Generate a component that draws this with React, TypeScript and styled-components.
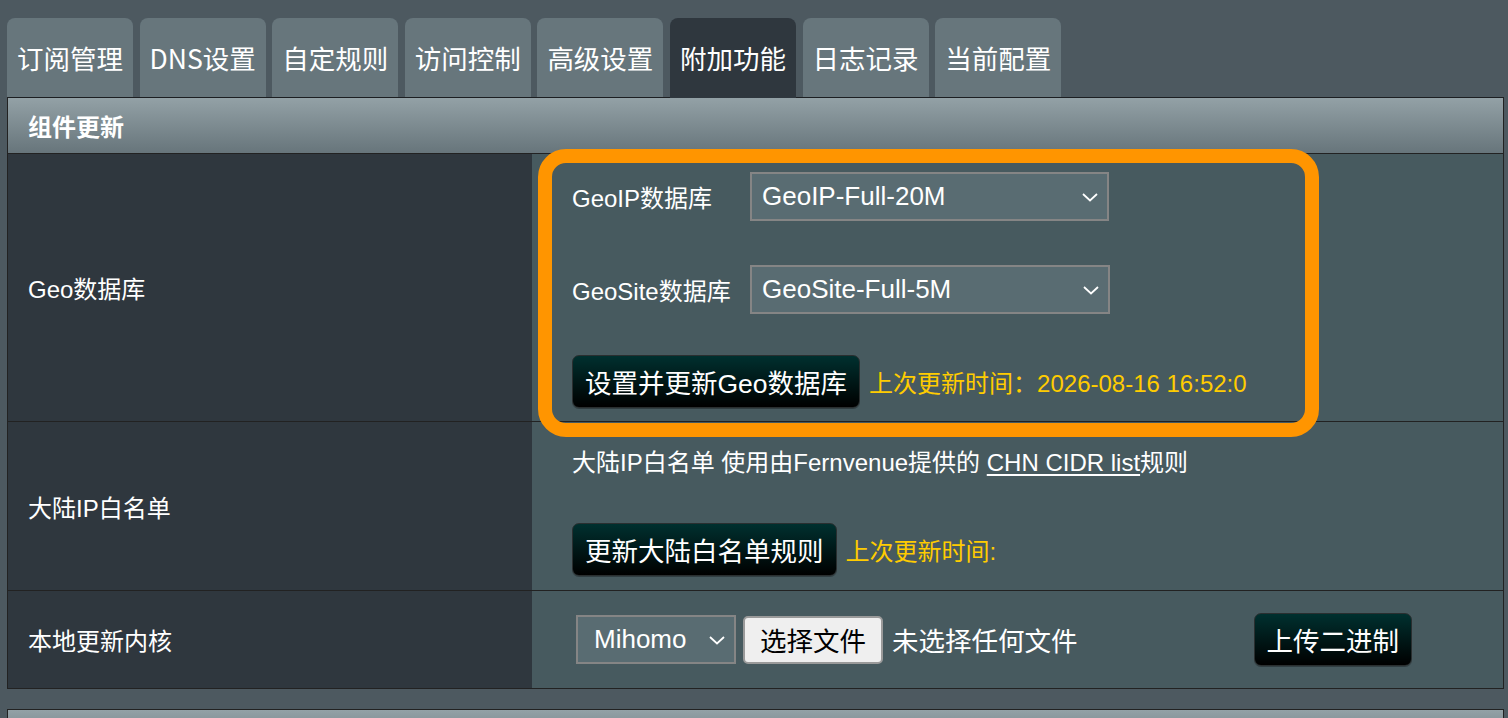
import styled, { createGlobalStyle } from "styled-components";

const GlobalStyle = createGlobalStyle`
  html, body {
    margin: 0;
    padding: 0;
    background: #4d5960;
  }
  body {
    font-family: "Liberation Sans", "Noto Sans CJK SC", sans-serif;
    color: #ffffff;
  }
`;

const Page = styled.div`
  box-sizing: border-box;
  height: 718px;
  overflow: hidden;
  padding: 18px 4px 0 7px;
`;

const TabBar = styled.div`
  display: flex;
  gap: 6.6px;
  position: relative;
  z-index: 2;
`;

const Tab = styled.div<{ $active?: boolean }>`
  box-sizing: border-box;
  width: 126px;
  height: ${(p) => (p.$active ? "80px" : "79px")};
  margin-bottom: ${(p) => (p.$active ? "-1px" : "0")};
  display: flex;
  align-items: center;
  justify-content: center;
  border-radius: 8px 8px 0 0;
  background: ${(p) => (p.$active ? "#2f373e" : "#67767c")};
  font-family: "Noto Sans CJK SC", sans-serif;
  font-size: 26.5px;
  line-height: 1;
  padding-top: 1px;
  color: #ffffff;
`;

const Table = styled.div`
  border: 1px solid #222;
  border-top-color: #1c1f22;
`;

const SectionHead = styled.div`
  box-sizing: border-box;
  height: 56px;
  display: flex;
  align-items: center;
  padding-left: 20px;
  background: linear-gradient(#93a1a6, #67757b);
  border-bottom: 1px solid #222;
  font-family: "Noto Sans CJK SC", sans-serif;
  font-weight: 700;
  font-size: 24px;
  color: #ffffff;
`;

const Row = styled.div<{ $h: number; $last?: boolean }>`
  box-sizing: border-box;
  display: grid;
  grid-template-columns: 524px 1fr;
  height: ${(p) => p.$h}px;
  border-bottom: ${(p) => (p.$last ? "none" : "1px solid #222")};
`;

const LabelCell = styled.div`
  display: flex;
  align-items: center;
  padding-left: 20px;
  background: #2f373e;
  font-size: 24px;
  color: #ffffff;
`;

const ValueCell = styled.div<{ $pad: string; $center?: boolean }>`
  position: relative;
  display: flex;
  flex-direction: column;
  align-items: flex-start;
  justify-content: ${(p) => (p.$center ? "center" : "flex-start")};
  padding: ${(p) => p.$pad};
  background: #475a5f;
`;

const Highlight = styled.div`
  position: absolute;
  z-index: 3;
  left: 6px;
  top: -5px;
  width: 781px;
  height: 288px;
  box-sizing: border-box;
  border: 14px solid #ff9500;
  border-radius: 28px;
  pointer-events: none;
`;

const FieldLine = styled.div<{ $gap?: number }>`
  display: flex;
  align-items: center;
  margin-top: ${(p) => p.$gap ?? 0}px;
`;

const FieldLabel = styled.div`
  width: 178px;
  font-size: 24px;
  color: #ffffff;
`;

const SelectBox = styled.div<{ $w: number; $indent: number }>`
  box-sizing: border-box;
  position: relative;
  width: ${(p) => p.$w}px;
  height: 49px;
  display: flex;
  align-items: center;
  padding-left: ${(p) => p.$indent}px;
  background: #596c72;
  border: 2px solid #858585;
  font-size: 26px;
  color: #ffffff;
`;

const Chevron = styled.svg`
  position: absolute;
  right: 7px;
  top: 50%;
  margin-top: -5px;
`;

const ActionLine = styled.div<{ $gap?: number }>`
  display: flex;
  align-items: center;
  margin-top: ${(p) => p.$gap ?? 0}px;
`;

const DarkButton = styled.button<{ $ml?: number }>`
  box-sizing: border-box;
  height: 53px;
  padding: 0 12px;
  margin-left: ${(p) => p.$ml ?? 0}px;
  border: 1px solid #2a2f30;
  border-radius: 7px;
  background: linear-gradient(#00302f, #000000);
  font-family: "Liberation Sans", "Noto Sans CJK SC", sans-serif;
  font-size: 26.5px;
  color: #ffffff;
  box-shadow: 0 1px 0 rgba(0, 0, 0, 0.3);
`;

const Note = styled.span`
  margin-left: 9px;
  font-size: 24px;
  color: #ffcc00;
`;

const Text = styled.div`
  font-size: 24px;
  line-height: 28px;
  color: #ffffff;
`;

const Link = styled.span`
  text-decoration: underline;
  text-underline-offset: 3px;
`;

const FileButton = styled.button`
  box-sizing: border-box;
  height: 48px;
  padding: 0 15px;
  margin-left: 7px;
  border: 2px solid #9a9a9a;
  border-radius: 5px;
  background: #efefef;
  font-family: "Noto Sans CJK SC", sans-serif;
  font-size: 26.5px;
  color: #000000;
`;

const FileStatus = styled.span`
  margin-left: 9px;
  font-family: "Noto Sans CJK SC", sans-serif;
  font-size: 26.5px;
  color: #ffffff;
`;

const NextHead = styled.div`
  margin-top: 20px;
  height: 40px;
  border: 1px solid #222;
  background: linear-gradient(#93a1a6, #67757b);
`;

function Select({ value, width, indent = 10 }: { value: string; width: number; indent?: number }) {
  return (
    <SelectBox $w={width} $indent={indent}>
      {value}
      <Chevron width="20" height="10" viewBox="0 0 20 10">
        <path d="M3 2 L10 8.5 L17 2" fill="none" stroke="#ffffff" strokeWidth="1.8" />
      </Chevron>
    </SelectBox>
  );
}

const tabs = ["订阅管理", "DNS设置", "自定规则", "访问控制", "高级设置", "附加功能", "日志记录", "当前配置"];

export default function App() {
  return (
    <Page>
      <GlobalStyle />
      <TabBar>
        {tabs.map((t) => (
          <Tab key={t} $active={t === "附加功能"}>
            {t}
          </Tab>
        ))}
      </TabBar>
      <Table>
        <SectionHead>组件更新</SectionHead>
        <Row $h={268}>
          <LabelCell>Geo数据库</LabelCell>
          <ValueCell $pad="18px 0 0 40px">
            <FieldLine>
              <FieldLabel>GeoIP数据库</FieldLabel>
              <Select value="GeoIP-Full-20M" width={359} />
            </FieldLine>
            <FieldLine $gap={44}>
              <FieldLabel>GeoSite数据库</FieldLabel>
              <Select value="GeoSite-Full-5M" width={360} />
            </FieldLine>
            <ActionLine $gap={41}>
              <DarkButton>设置并更新Geo数据库</DarkButton>
              <Note>上次更新时间：2026-08-16 16:52:0</Note>
            </ActionLine>
            <Highlight />
          </ValueCell>
        </Row>
        <Row $h={169}>
          <LabelCell>大陆IP白名单</LabelCell>
          <ValueCell $pad="27px 0 0 40px">
            <Text>
              大陆IP白名单 使用由Fernvenue提供的 <Link>CHN CIDR list</Link>规则
            </Text>
            <ActionLine $gap={46}>
              <DarkButton>更新大陆白名单规则</DarkButton>
              <Note>上次更新时间:</Note>
            </ActionLine>
          </ValueCell>
        </Row>
        <Row $h={97} $last>
          <LabelCell>本地更新内核</LabelCell>
          <ValueCell $pad="0 0 0 44px" $center>
            <ActionLine>
              <Select value="Mihomo" width={160} indent={16} />
              <FileButton>选择文件</FileButton>
              <FileStatus>未选择任何文件</FileStatus>
              <DarkButton $ml={176}>上传二进制</DarkButton>
            </ActionLine>
          </ValueCell>
        </Row>
      </Table>
      <NextHead />
    </Page>
  );
}
